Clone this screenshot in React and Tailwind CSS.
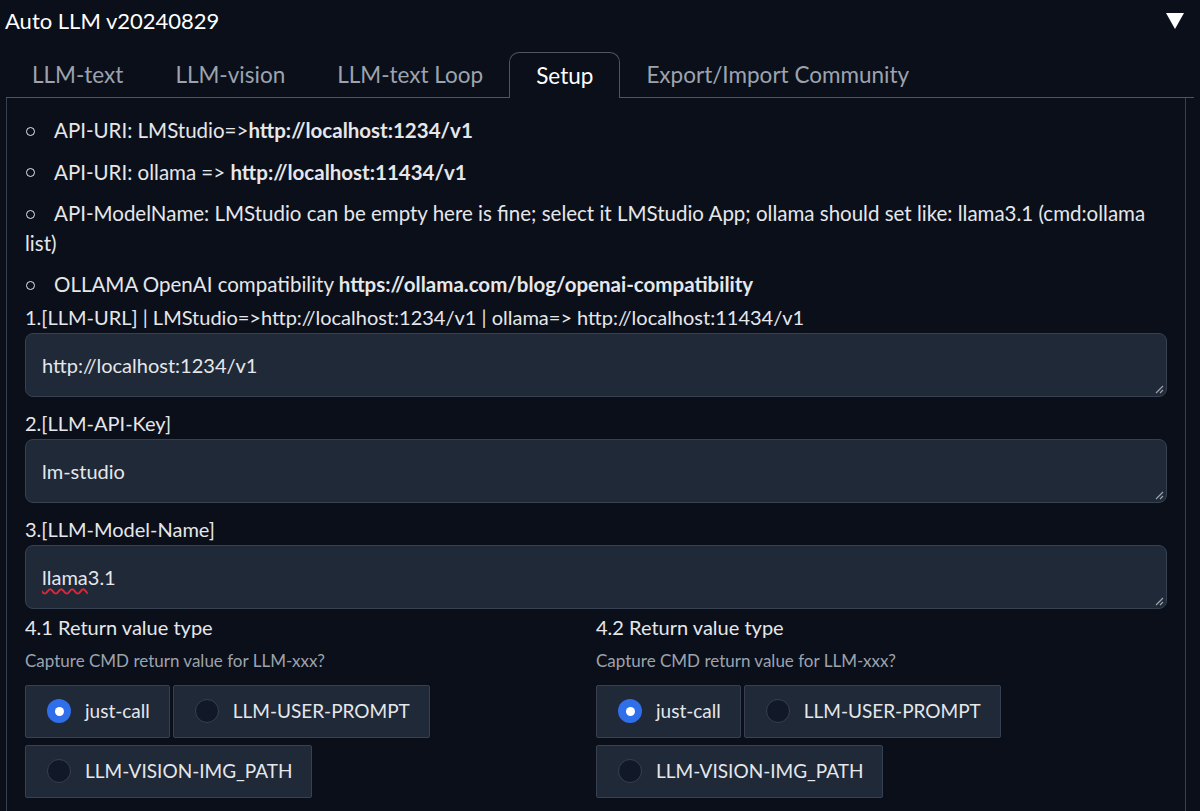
import { useState } from "react";

const font = { fontFamily: "Lato, 'Noto Sans', sans-serif" };

function Radio({ label, checked, onClick }) {
  return (
    <button
      onClick={onClick}
      className="flex h-[53px] items-center gap-[14px] rounded-[2px] border border-[#374151] bg-[#1f2937] pl-[21px] pr-[19px] text-[19px] text-[#e5e7eb]"
    >
      {checked ? (
        <span className="flex h-[24px] w-[24px] items-center justify-center rounded-full bg-[#2f6fea]">
          <span className="h-[9px] w-[9px] rounded-full bg-white" />
        </span>
      ) : (
        <span className="h-[24px] w-[24px] rounded-full border border-[#374151] bg-[#111827]" />
      )}
      {label}
    </button>
  );
}

function ReturnType({ title }) {
  const [value, setValue] = useState("just-call");

  return (
    <div className="flex flex-col">
      <div className="text-[20px] leading-[28px] text-[#e5e7eb]">{title}</div>
      <div className="mt-[9px] text-[17px] leading-[22px] text-[#9ca3af]">
        Capture CMD return value for LLM-xxx?
      </div>
      <div className="mt-[13px] flex flex-wrap gap-x-[3px] gap-y-[7px] pr-[150px]">
        {["just-call", "LLM-USER-PROMPT", "LLM-VISION-IMG_PATH"].map((opt) => (
          <Radio
            key={opt}
            label={opt}
            checked={value === opt}
            onClick={() => setValue(opt)}
          />
        ))}
      </div>
    </div>
  );
}

function Field({ label, value, spell }) {
  return (
    <div className="flex flex-col">
      <div className="text-[20px] leading-[28px] text-[#e5e7eb]">{label}</div>
      <div className="relative mt-[2px] h-[64px] rounded-[8px] border border-[#374151] bg-[#1f2937] px-[16px] pt-[16px] text-[20px] text-[#e5e7eb]">
        {spell ? (
          <span>
            <span className="underline decoration-wavy decoration-[#e0263a] underline-offset-[3px]">llama</span>3.1
          </span>
        ) : (
          value
        )}
        <svg className="absolute bottom-[2px] right-[2px]" width="9" height="9" viewBox="0 0 9 9">
          <path d="M8 1L1 8M8 5L5 8" stroke="#9ca3af" strokeWidth="1.2" />
        </svg>
      </div>
    </div>
  );
}

function Bullet({ children }) {
  return (
    <li>
      <span className="mb-[3px] ml-[1px] mr-[19px] inline-block h-[9px] w-[9px] rounded-full border-[1.5px] border-[#e5e7eb] align-middle" />
      {children}
    </li>
  );
}

export default function App() {
  const tabs = ["LLM-text", "LLM-vision", "LLM-text Loop", "Setup", "Export/Import Community"];
  const [tab, setTab] = useState("Setup");

  return (
    <div style={font} className="h-[811px] w-[1200px] overflow-hidden bg-[#0b0f19]">
      {/* HEADER */}
      <div className="flex items-center justify-between pl-[5px] pr-[15px] pt-[5px]">
        <span className="text-[22px] leading-[32px] text-white">Auto LLM v20240829</span>
        <svg width="20" height="18" viewBox="0 0 20 18">
          <path d="M1 1H19L10 17Z" fill="white" />
        </svg>
      </div>

      {/* TABS */}
      <div className="mx-[6px] mt-[15px] flex items-end border-b border-[#4b5563] pr-[14px]">
        {tabs.map((t) =>
          t === tab ? (
            <button
              key={t}
              className="-mb-px h-[46px] rounded-t-[10px] border border-b-0 border-[#4b5563] bg-[#0b0f19] px-[26px] text-[22.5px] text-white"
            >
              {t}
            </button>
          ) : (
            <button
              key={t}
              onClick={() => setTab(t)}
              className="h-[45px] px-[26px] text-[22.5px] text-[#9ca3af]"
            >
              {t}
            </button>
          )
        )}
      </div>

      {/* PANEL */}
      <div className="mx-[6px] mr-[14px] border-x border-[#374151] px-[18px] pb-[20px] pt-[18px]">
        <ul className="flex flex-col gap-[12px] text-[20.5px] leading-[29.5px] text-[#e5e7eb]">
          <Bullet>
            API-URI: LMStudio=&gt;<b>http://localhost:1234/v1</b>
          </Bullet>
          <Bullet>
            API-URI: ollama =&gt; <b>http://localhost:11434/v1</b>
          </Bullet>
          <Bullet>
            API-ModelName: LMStudio can be empty here is fine; select it LMStudio App; ollama should set like: llama3.1 (cmd:ollama list)
          </Bullet>
          <Bullet>
            OLLAMA OpenAI compatibility <b>https://ollama.com/blog/openai-compatibility</b>
          </Bullet>
        </ul>

        <div className="mt-[3px] flex flex-col gap-[12px]">
          <Field
            label="1.[LLM-URL] | LMStudio=>http://localhost:1234/v1 | ollama=> http://localhost:11434/v1"
            value="http://localhost:1234/v1"
          />
          <Field label="2.[LLM-API-Key]" value="lm-studio" />
          <Field label="3.[LLM-Model-Name]" spell />
        </div>

        <div className="mt-[4px] grid grid-cols-2">
          <ReturnType title="4.1 Return value type" />
          <ReturnType title="4.2 Return value type" />
        </div>
      </div>
    </div>
  );
}
